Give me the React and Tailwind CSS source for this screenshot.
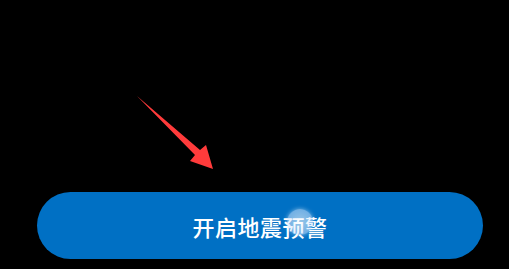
export default function App() {
  return (
    <div className="relative flex h-[269px] w-full flex-col justify-end overflow-hidden bg-black pb-[10px] pl-[37px] pr-[26px]">
      {/* red annotation arrow */}
      <svg className="absolute left-0 top-0" width="509" height="269" viewBox="0 0 509 269">
        <polygon
          points="137,96 200,150 206,145 213,169 190,161 195,155"
          fill="#ff3b3b"
        />
      </svg>
      <button className="relative flex h-[67px] w-full items-center justify-center rounded-full bg-[#0070c4]">
        <span className="text-[22px] font-medium leading-none tracking-[0.5px] text-white [font-family:'Noto_Sans_CJK_SC',sans-serif]">
          开启地震预警
        </span>
        {/* touch indicator */}
        <span className="absolute left-[250px] top-[17px] h-[26px] w-[26px] rounded-full bg-[radial-gradient(circle,rgba(255,255,255,0.6)_0%,rgba(210,230,255,0.55)_65%,rgba(255,255,255,0.15)_100%)] shadow-[0_0_4px_rgba(255,255,255,0.5)]" />
      </button>
    </div>
  );
}
